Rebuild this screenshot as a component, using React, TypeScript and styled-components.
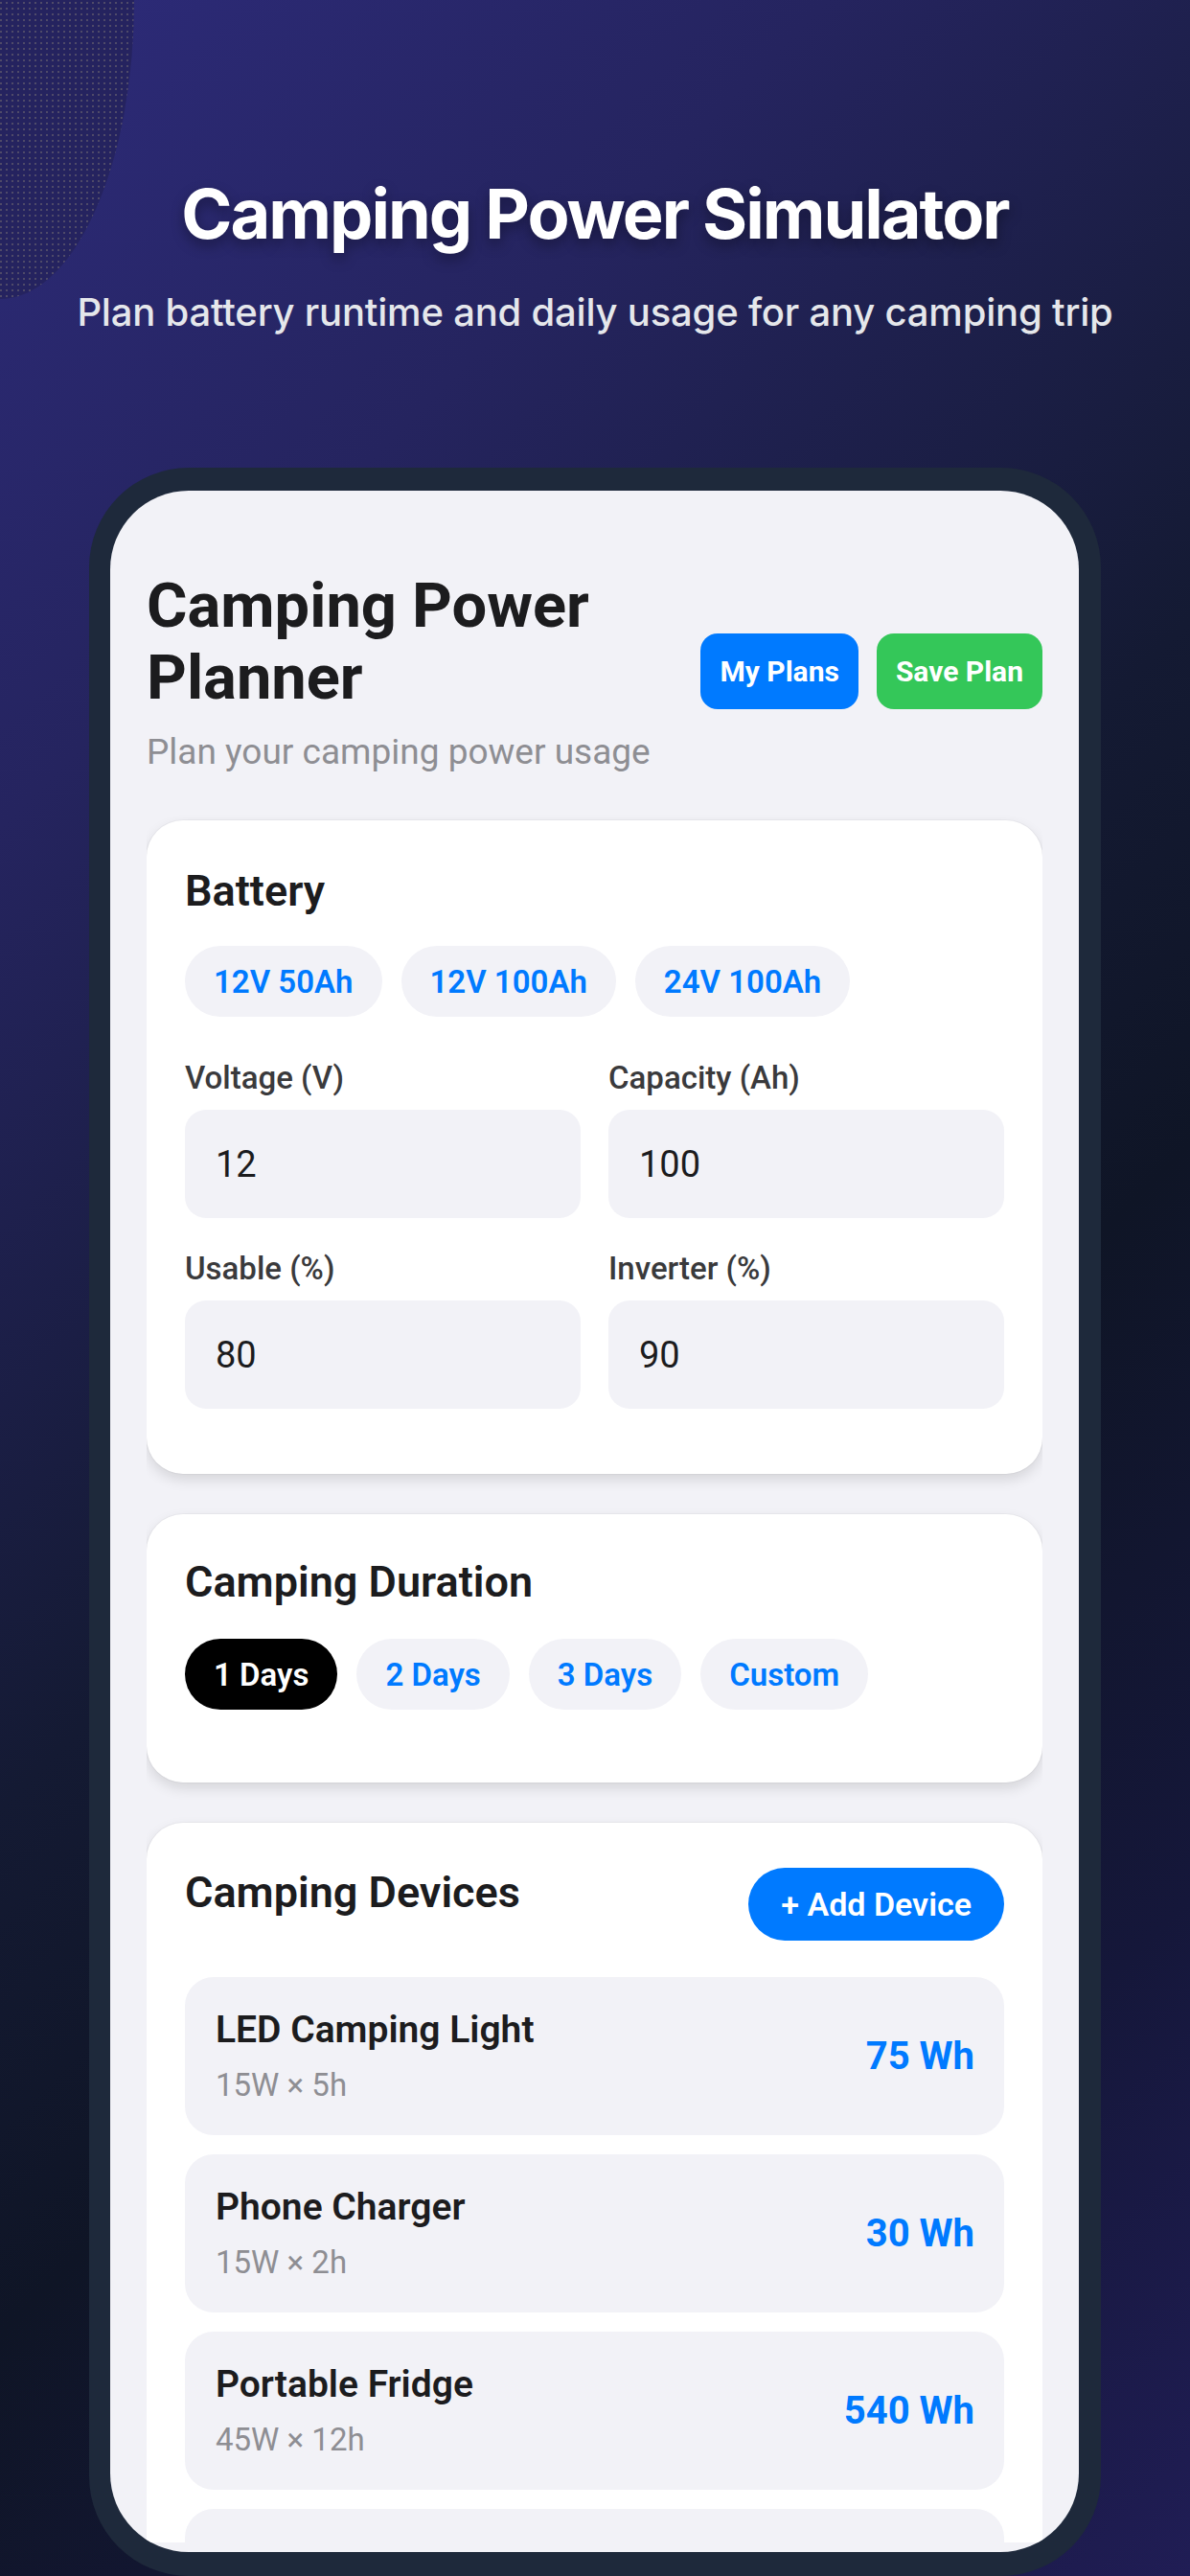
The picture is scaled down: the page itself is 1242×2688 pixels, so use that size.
import React from "react";
import styled, { createGlobalStyle } from "styled-components";

const GlobalStyle = createGlobalStyle`
  html, body {
    margin: 0;
    padding: 0;
    background: #0f1526;
  }
  * {
    box-sizing: border-box;
  }
`;

const Page = styled.div`
  position: relative;
  width: 1242px;
  height: 2688px;
  overflow: hidden;
  display: flex;
  flex-direction: column;
  align-items: center;
  background: linear-gradient(
    135deg,
    #2d2b7a 0%,
    #25245f 22%,
    #141a33 48%,
    #0f1526 62%,
    #15173a 82%,
    #201d55 100%
  );
`;

const Blob = styled.div`
  position: absolute;
  left: -140px;
  top: -312px;
  width: 280px;
  height: 624px;
  border-radius: 50%;
  background-color: #25235f;
  background-image: radial-gradient(rgba(190, 180, 130, 0.28) 0.7px, transparent 1.2px);
  background-size: 6px 6px;
`;

const Hero = styled.header`
  position: relative;
  padding-top: 180px;
  text-align: center;
  font-family: Inter, "Noto Sans", sans-serif;
`;

const HeroTitle = styled.h1`
  margin: 0;
  font-size: 72px;
  line-height: 86px;
  font-weight: 700;
  letter-spacing: -2px;
  color: #ffffff;
  text-shadow: 0 6px 14px rgba(0, 0, 0, 0.35);
`;

const HeroSub = styled.p`
  margin: 33px 0 0;
  font-size: 40px;
  line-height: 54px;
  font-weight: 500;
  letter-spacing: -0.2px;
  color: #e5e7eb;
`;

const Frame = styled.div`
  position: relative;
  margin-top: 135px;
  width: 1056px;
  height: 2200px;
  padding: 24px 23px 25px 22px;
  border-radius: 104px;
  background: #1e293b;
  flex-shrink: 0;
`;

const Screen = styled.div`
  height: 100%;
  border-radius: 82px;
  overflow: hidden;
  background: #f2f2f7;
  padding: 83px 38px 10px;
  display: flex;
  flex-direction: column;
  font-family: Roboto, "Liberation Sans", sans-serif;
  color: #1c1c1e;
`;

const Scroll = styled.div`
  flex: 1;
  overflow: hidden;
  display: flex;
  flex-direction: column;
`;

const TopBar = styled.div`
  display: flex;
  align-items: center;
  gap: 20px;
`;

const TitleBlock = styled.div`
  flex: 1;
  min-width: 0;
`;

const AppTitle = styled.h2`
  margin: 0;
  font-size: 65px;
  line-height: 75px;
  font-weight: 700;
  color: #1c1c1e;
`;

const AppSub = styled.p`
  margin: 18px 0 0;
  font-size: 37px;
  line-height: 43px;
  color: #8e8e93;
  white-space: nowrap;
`;

const Actions = styled.div`
  display: flex;
  gap: 19px;
`;

const ActionButton = styled.button<{ $color: string }>`
  height: 79px;
  padding: 0 20px;
  border: none;
  border-radius: 18px;
  background: ${({ $color }) => $color};
  color: #ffffff;
  font-family: inherit;
  font-size: 30px;
  font-weight: 700;
  white-space: nowrap;
`;

const Card = styled.section<{ $pad: string }>`
  margin-top: 42px;
  padding: ${({ $pad }) => $pad};
  background: #ffffff;
  border-radius: 38px;
  box-shadow: 0 6px 14px rgba(0, 0, 0, 0.12), 0 0 0 1px rgba(0, 0, 0, 0.03);
  flex-shrink: 0;

  &:first-of-type {
    margin-top: 50px;
  }
`;

const CardTitle = styled.h3`
  margin: 0;
  font-size: 45px;
  line-height: 52px;
  font-weight: 600;
  color: #1c1c1e;
`;

const ChipRow = styled.div<{ $top: number }>`
  display: flex;
  gap: 20px;
  margin-top: ${({ $top }) => $top}px;
`;

const Chip = styled.button<{ $active?: boolean }>`
  height: 74px;
  padding: 0 30px;
  border: none;
  border-radius: 37px;
  background: ${({ $active }) => ($active ? "#000000" : "#f2f2f7")};
  color: ${({ $active }) => ($active ? "#ffffff" : "#007aff")};
  font-family: inherit;
  font-size: 33px;
  font-weight: 600;
  white-space: nowrap;
`;

const FieldGrid = styled.div`
  display: grid;
  grid-template-columns: 1fr 1fr;
  column-gap: 29px;
  row-gap: 34px;
  margin-top: 45px;
`;

const Field = styled.label`
  display: flex;
  flex-direction: column;
`;

const FieldLabel = styled.span`
  font-size: 33px;
  line-height: 38px;
  font-weight: 500;
  color: #3a3a3c;
`;

const FieldValue = styled.div`
  margin-top: 14px;
  height: 113px;
  padding: 0 32px;
  display: flex;
  align-items: center;
  border-radius: 22px;
  background: #f2f2f7;
  font-size: 38px;
  color: #1c1c1e;
`;

const CardHead = styled.div`
  display: flex;
  justify-content: space-between;
  align-items: flex-start;
`;

const AddButton = styled.button`
  height: 76px;
  padding: 0 34px;
  border: none;
  border-radius: 38px;
  background: #007aff;
  color: #ffffff;
  font-family: inherit;
  font-size: 34px;
  font-weight: 600;
`;

const DeviceList = styled.div`
  display: flex;
  flex-direction: column;
  gap: 20px;
  margin-top: 38px;
`;

const DeviceRow = styled.div`
  height: 165px;
  flex-shrink: 0;
  padding: 0 31px 0 32px;
  border-radius: 30px;
  background: #f2f2f7;
  display: flex;
  align-items: center;
  justify-content: space-between;
`;

const DeviceInfo = styled.div`
  display: flex;
  flex-direction: column;
  gap: 16px;
`;

const DeviceName = styled.span`
  font-size: 39px;
  line-height: 45px;
  font-weight: 600;
  color: #1c1c1e;
`;

const DeviceMeta = styled.span`
  font-size: 33px;
  line-height: 38px;
  color: #8e8e93;
`;

const DeviceWh = styled.span`
  font-size: 40px;
  font-weight: 700;
  color: #007aff;
`;

const presets = ["12V 50Ah", "12V 100Ah", "24V 100Ah"];

const fields = [
  { label: "Voltage (V)", value: "12" },
  { label: "Capacity (Ah)", value: "100" },
  { label: "Usable (%)", value: "80" },
  { label: "Inverter (%)", value: "90" },
];

const durations = ["1 Days", "2 Days", "3 Days", "Custom"];

const devices = [
  { name: "LED Camping Light", watts: 15, hours: 5 },
  { name: "Phone Charger", watts: 15, hours: 2 },
  { name: "Portable Fridge", watts: 45, hours: 12 },
];

export default function App() {
  return (
    <>
      <GlobalStyle />
      <Page>
        <Blob />
        <Hero>
          <HeroTitle>Camping Power Simulator</HeroTitle>
          <HeroSub>Plan battery runtime and daily usage for any camping trip</HeroSub>
        </Hero>

        <Frame>
          <Screen>
            <Scroll>
              <TopBar>
                <TitleBlock>
                  <AppTitle>Camping Power Planner</AppTitle>
                  <AppSub>Plan your camping power usage</AppSub>
                </TitleBlock>
                <Actions>
                  <ActionButton $color="#007aff">My Plans</ActionButton>
                  <ActionButton $color="#34c759">Save Plan</ActionButton>
                </Actions>
              </TopBar>

              <Card $pad="48px 40px 68px">
                <CardTitle>Battery</CardTitle>
                <ChipRow $top={31}>
                  {presets.map((p) => (
                    <Chip key={p}>{p}</Chip>
                  ))}
                </ChipRow>
                <FieldGrid>
                  {fields.map((f) => (
                    <Field key={f.label}>
                      <FieldLabel>{f.label}</FieldLabel>
                      <FieldValue>{f.value}</FieldValue>
                    </Field>
                  ))}
                </FieldGrid>
              </Card>

              <Card $pad="45px 40px 76px">
                <CardTitle>Camping Duration</CardTitle>
                <ChipRow $top={33}>
                  {durations.map((d, i) => (
                    <Chip key={d} $active={i === 0}>
                      {d}
                    </Chip>
                  ))}
                </ChipRow>
              </Card>

              <Card $pad="47px 40px 40px">
                <CardHead>
                  <CardTitle>Camping Devices</CardTitle>
                  <AddButton>+ Add Device</AddButton>
                </CardHead>
                <DeviceList>
                  {devices.map((d) => (
                    <DeviceRow key={d.name}>
                      <DeviceInfo>
                        <DeviceName>{d.name}</DeviceName>
                        <DeviceMeta>
                          {d.watts}W × {d.hours}h
                        </DeviceMeta>
                      </DeviceInfo>
                      <DeviceWh>{d.watts * d.hours} Wh</DeviceWh>
                    </DeviceRow>
                  ))}
                  {/* next row is scrolled past the bottom of the screen */}
                  <DeviceRow />
                </DeviceList>
              </Card>
            </Scroll>
          </Screen>
        </Frame>
      </Page>
    </>
  );
}
